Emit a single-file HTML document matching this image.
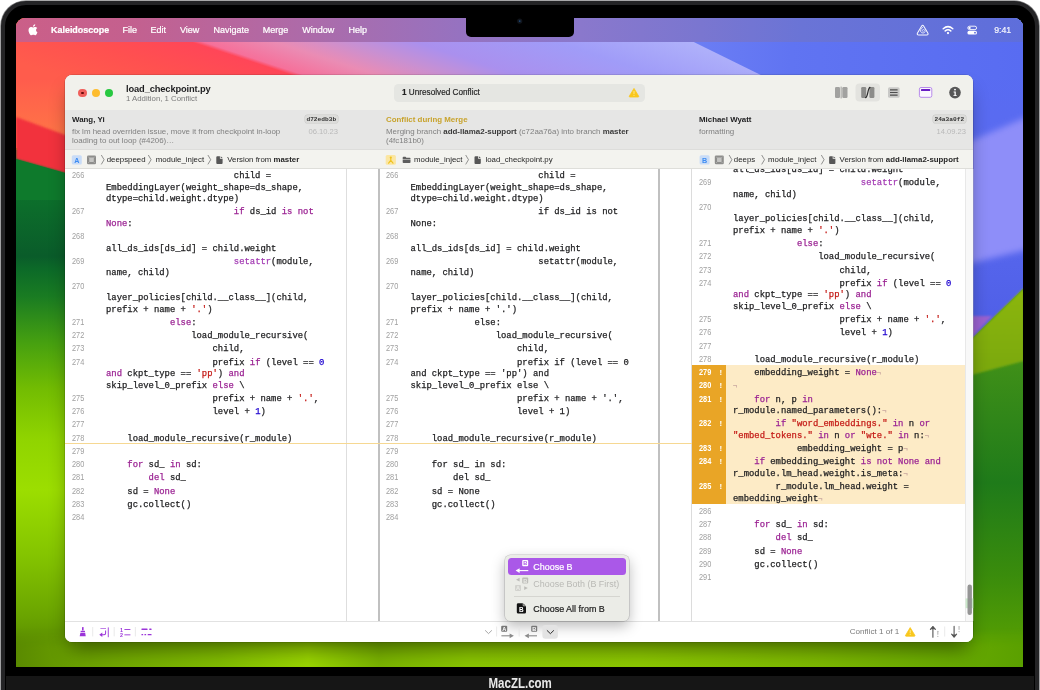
<!DOCTYPE html>
<html lang="en">
<head>
<meta charset="utf-8">
<title>Kaleidoscope – load_checkpoint.py</title>
<style>
*{box-sizing:border-box;margin:0;padding:0}
html,body{width:1040px;height:690px;overflow:hidden;background:#fff;font-family:"Liberation Sans",sans-serif;}
.abs{position:absolute}
#laptop{position:absolute;left:1px;top:1px;width:1038px;height:720px;border-radius:25px 25px 0 0;background:#000;border:4px solid #242426;box-shadow:0 0 0 .8px #8a8a8c}
#screen{will-change:transform;position:absolute;left:16px;top:18px;width:1007px;height:649px;border-radius:9px 9px 0 0;overflow:hidden;background:#6a9a10;}
#chin{will-change:transform;position:absolute;left:6px;top:675.7px;width:1028px;height:14px;background:#161616;color:#fff;text-align:center;}
#chin span{position:absolute;left:0;width:100%;top:.6px;font:bold 13.8px/14px "Liberation Sans",sans-serif;transform:scaleX(.835);transform-origin:515px 0;color:#e9e9e9}
#menubar{position:absolute;left:0;top:0;width:1008px;height:24.3px;background:linear-gradient(90deg,#cb5f88 0%,#c4608e 11%,#b468a2 24%,#a46eb2 35%,#9672c0 44%,#8a78cc 56%,#7a76d0 68%,#6a74d6 78%,#5e6edb 100%);color:#fff;font-size:9px;line-height:24.6px;white-space:nowrap}
#menubar span{position:absolute;top:0;-webkit-text-stroke:.22px #fff}
#notch{position:absolute;left:450px;top:0;width:108px;height:19px;background:#000;border-radius:0 0 5px 5px}
/* window: page coords */
#winshadow{position:absolute;left:65px;top:75.3px;width:908px;height:567.2px;border-radius:7px;box-shadow:0 12px 20px -5px rgba(0,0,0,.45),0 0 0 .6px rgba(0,0,0,.2)}
#win{will-change:transform;position:absolute;left:65px;top:75.3px;width:908px;height:567.2px;border-radius:7px;background:#fff;overflow:hidden}
#titlebar{position:absolute;left:0;top:0;width:908px;height:34.7px;background:#f1f1ec}
#info{position:absolute;left:0;top:34.7px;width:908px;height:40px;background:#e6e6e5;border-bottom:1px solid #dddddb}
#pathbar{position:absolute;left:0;top:74.7px;width:908px;height:19px;background:#f3f3ef;border-bottom:1px solid #dededa;font-size:7.85px;line-height:19px;color:#262626;white-space:nowrap}
#pathbar span{position:absolute;top:.2px}
.tl{position:absolute;top:13.5px;width:8.6px;height:8.6px;border-radius:50%}
.t{position:absolute;white-space:nowrap}
.pane{position:absolute;top:93.7px;height:453px;background:#fff;overflow:hidden}
.ln{position:relative;padding-top:1.75px}
.ln pre{font-family:"Liberation Mono",monospace;font-size:8.9px;line-height:11.5px;color:#1d1d1f;margin-left:41px;white-space:pre;-webkit-text-stroke:.25px #1d1d1f}
.ln .no{position:absolute;left:7px;top:.8px;font-size:8.2px;transform:scaleX(.9);transform-origin:0 0;line-height:11.5px;color:#a0a0a0;font-family:"Liberation Sans",sans-serif}
.ln .mk{position:absolute;left:27.6px;top:.8px;font-size:7.8px;line-height:11.5px;color:#fff;font-weight:bold}
#pm .ln pre{margin-left:30.3px}
#pm .ln .no{left:5.4px}
.k{color:#9b2393;-webkit-text-stroke-color:#9b2393}
.b{color:#a43db4;-webkit-text-stroke-color:#a43db4}
.s{color:#c41a16;-webkit-text-stroke-color:#c41a16}
.n{color:#1c00cf;-webkit-text-stroke-color:#1c00cf}
.e{color:#c9a8a0;-webkit-text-stroke-color:#c9a8a0;font-size:7px}
.cfblock{position:relative;z-index:0}
.cfblock::before{content:"";position:absolute;left:0;right:0;top:-1.3px;bottom:1.4px;z-index:-1;background:linear-gradient(90deg,#e9a526 0,#e9a526 34.3px,#fdebc6 34.3px)}
.cf .no{color:#fff;font-weight:bold}
#bottombar{position:absolute;left:0;top:545.7px;width:908px;height:21.5px;background:#fff;border-top:1px solid #e2e2e2}
#menu{position:absolute;left:439.5px;top:479.7px;width:124.7px;height:66px;border-radius:5.5px;background:#ebece7;box-shadow:0 0 0 .6px rgba(0,0,0,.18),0 5px 14px rgba(0,0,0,.28);font-size:8.95px;color:#1a1a1a}
.pill{position:absolute;height:7.6px;border-radius:2.6px;background:#dcdcda;box-shadow:0 0 0 .5px #c9c9c7;font:bold 6.2px/9px "Liberation Mono",monospace;color:#303030;text-align:center}
</style>
</head>
<body>
<div id="laptop"></div>
<div id="screen">
  <div id="wall" class="abs" style="left:0;top:0;width:1008px;height:649px"><svg width="1008" height="649" viewBox="16 18 1008 649" style="position:absolute;left:0;top:0">
<defs>
<linearGradient id="gt" gradientUnits="userSpaceOnUse" x1="-173" y1="0" x2="830" y2="0" gradientTransform="skewX(71.8)">
<stop offset="0" stop-color="#ff5c4c"/>
<stop offset=".13" stop-color="#ff5050"/>
<stop offset=".236" stop-color="#ff4658"/>
<stop offset=".248" stop-color="#f6709a"/>
<stop offset=".32" stop-color="#ea8cb4"/>
<stop offset=".39" stop-color="#c890d2"/>
<stop offset=".46" stop-color="#aa90ee"/>
<stop offset=".60" stop-color="#a09cf8"/>
<stop offset=".78" stop-color="#b4b8fb"/>
<stop offset="1" stop-color="#b4b8fb"/>
</linearGradient>
<linearGradient id="gtb" gradientUnits="userSpaceOnUse" x1="690" y1="0" x2="1024" y2="0">
<stop offset="0" stop-color="#6c7ef4"/><stop offset=".3" stop-color="#6074f2"/><stop offset="1" stop-color="#586cf2"/>
</linearGradient>
<linearGradient id="gl1" gradientUnits="userSpaceOnUse" x1="0" y1="76" x2="0" y2="140"><stop offset="0" stop-color="#ff5b4d"/><stop offset="1" stop-color="#ff7646"/></linearGradient>
<linearGradient id="gl2" gradientUnits="userSpaceOnUse" x1="0" y1="160" x2="0" y2="667">
<stop offset="0" stop-color="#0e7c2c"/>
<stop offset=".19" stop-color="#0a5c2a"/>
<stop offset=".215" stop-color="#0c6a28"/>
<stop offset=".27" stop-color="#1a7c22"/>
<stop offset=".36" stop-color="#46a010"/>
<stop offset=".45" stop-color="#72bc02"/>
<stop offset=".55" stop-color="#90d400"/>
<stop offset=".65" stop-color="#9cde00"/>
<stop offset=".78" stop-color="#84c400"/>
<stop offset=".9" stop-color="#6aa400"/>
<stop offset="1" stop-color="#507c00"/>
</linearGradient>
<linearGradient id="gr1" gradientUnits="userSpaceOnUse" x1="0" y1="42" x2="0" y2="340">
<stop offset="0" stop-color="#586cf2"/>
<stop offset=".5" stop-color="#5a6af0"/>
<stop offset="1" stop-color="#4e5ee6"/>
</linearGradient>
<linearGradient id="gr2" gradientUnits="userSpaceOnUse" x1="0" y1="360" x2="0" y2="667">
<stop offset="0" stop-color="#409018"/>
<stop offset=".4" stop-color="#1f7b1a"/>
<stop offset=".7" stop-color="#3a8c0c"/>
<stop offset="1" stop-color="#5ea400"/>
</linearGradient>
<linearGradient id="gr3" gradientUnits="userSpaceOnUse" x1="0" y1="290" x2="0" y2="375">
<stop offset="0" stop-color="#8cb60a"/>
<stop offset="1" stop-color="#7aa812"/>
</linearGradient>
<linearGradient id="gb" gradientUnits="userSpaceOnUse" x1="16" y1="0" x2="1024" y2="0">
<stop offset="0" stop-color="#5a8a00"/>
<stop offset=".06" stop-color="#6aa000"/>
<stop offset=".2" stop-color="#80bc00"/>
<stop offset=".29" stop-color="#9ad600"/>
<stop offset=".36" stop-color="#7ab400"/>
<stop offset=".45" stop-color="#8ac600"/>
<stop offset=".62" stop-color="#8cc800"/>
<stop offset=".8" stop-color="#7cb800"/>
<stop offset=".94" stop-color="#66a800"/>
<stop offset="1" stop-color="#5aa000"/>
</linearGradient>
<linearGradient id="gbv" x1="0" y1="0" x2="0" y2="1"><stop offset="0" stop-color="#000" stop-opacity="0"/><stop offset="1" stop-color="#000" stop-opacity=".22"/></linearGradient>
<filter id="bl"><feGaussianBlur stdDeviation="1.2"/></filter>
<linearGradient id="gmk" gradientUnits="userSpaceOnUse" x1="0" y1="628" x2="0" y2="648"><stop offset="0" stop-color="#000"/><stop offset="1" stop-color="#fff"/></linearGradient>
<mask id="mk" maskUnits="userSpaceOnUse" x="16" y="600" width="1008" height="67"><rect x="16" y="600" width="1008" height="67" fill="url(#gmk)"/></mask>
<filter id="bl3"><feGaussianBlur stdDeviation="3"/></filter>
</defs>
<rect x="16" y="18" width="1008" height="649" fill="#6aa000"/>
<!-- left strip -->
<rect x="16" y="150" width="60" height="517" fill="url(#gl2)"/>
<rect x="16" y="18" width="60" height="130" fill="url(#gl1)"/>
<polygon points="16,117 76,139 76,176 16,159" fill="#f2303e" filter="url(#bl)"/>
<polygon points="16,159 76,176 76,200 16,200" fill="#0e7a2c"/>
<!-- right strip -->
<rect x="960" y="18" width="64" height="330" fill="url(#gr1)"/>
<polygon points="950,150 1034,114 1034,248 950,268" fill="#8e8ef9" filter="url(#bl3)"/>
<polygon points="1024,288 960,350 960,667 1024,667" fill="url(#gr2)"/>
<polygon points="1024,288 960,350 960,378 1024,361" fill="url(#gr3)" filter="url(#bl)"/>
<polygon points="960,316 992,316 960,350" fill="#9a62d0" filter="url(#bl)"/>
<!-- bottom strip -->
<rect x="16" y="600" width="1008" height="67" fill="url(#gb)" mask="url(#mk)"/>
<!-- top strip -->
<rect x="16" y="18" width="1008" height="62" fill="url(#gt)"/>
<polygon points="645,18 1024,18 1024,80 771,80" fill="url(#gtb)"/>
</svg>
</div>
  <div id="menubar">
    <span style="left:35px;font-weight:bold;font-size:8.95px">Kaleidoscope</span>
    <span style="left:106.6px">File</span>
    <span style="left:134.5px">Edit</span>
    <span style="left:164px">View</span>
    <span style="left:197.5px">Navigate</span>
    <span style="left:246.7px">Merge</span>
    <span style="left:286.3px">Window</span>
    <span style="left:332.4px">Help</span>
    <span style="left:978.2px;font-size:8.75px;opacity:.92">9:41</span>
  </div>
  <div id="notch"></div>
</div>
<div id="winshadow"></div>
<div id="win">
  <div id="titlebar">
    <div class="tl" style="left:13.2px;background:#f0605c"></div>
    <div class="abs" style="left:16.2px;top:16.5px;width:2.6px;height:2.6px;border-radius:50%;background:#6a0a0a"></div>
    <div class="tl" style="left:26.5px;background:#fdbc2e"></div>
    <div class="tl" style="left:39.8px;background:#28c840"></div>
    <div class="t" id="ttl" style="left:61px;top:8px;font-weight:bold;font-size:9.3px;line-height:12px;color:#1d1d1f;letter-spacing:-.12px">load_checkpoint.py</div>
    <div class="t" id="sub" style="left:61px;top:19.2px;font-size:7.8px;line-height:9px;color:#7a7a7a">1 Addition, 1 Conflict</div>
    <div class="abs" style="left:329px;top:8.6px;width:251px;height:18.2px;border-radius:4.5px;background:#e5e6e2"></div>
    <div class="t" id="unres" style="left:337px;top:9.4px;font-size:8.2px;line-height:18.2px;color:#222;-webkit-text-stroke:.15px #222"><b>1</b> Unresolved Conflict</div>
  </div>
  <div id="info">
    <div class="t" id="a1" style="left:7px;top:5.4px;font-weight:bold;font-size:7.9px;line-height:10px;color:#1d1d1f">Wang, Yi</div>
    <div class="t" id="d1" style="left:7px;top:16.9px;font-size:7.93px;line-height:9.3px;color:#808080">fix lm head overriden issue, move it from checkpoint in-loop<br>loading to out loop (#4206)…</div>
    <div class="pill" style="left:239.6px;top:5.8px;width:33.4px">d72edb3b</div>
    <div class="t" id="dt1" style="right:635px;top:17.1px;font-size:7.6px;line-height:9.1px;color:#b9b9b9">06.10.23</div>
    <div class="t" id="a2" style="left:321px;top:5.4px;font-weight:bold;font-size:7.9px;line-height:10px;color:#c8a32c">Conflict during Merge</div>
    <div class="t" id="d2" style="left:321px;top:16.9px;font-size:7.93px;line-height:9.3px;color:#808080">Merging branch <b style="color:#3a3a3a">add-llama2-support</b> (c72aa76a) into branch <b style="color:#3a3a3a">master</b><br>(4fc181b0)</div>
    <div class="t" id="a3" style="left:634px;top:5.4px;font-weight:bold;font-size:7.9px;line-height:10px;color:#1d1d1f">Michael Wyatt</div>
    <div class="t" id="d3" style="left:634px;top:16.9px;font-size:7.93px;line-height:9.3px;color:#808080">formatting</div>
    <div class="pill" style="left:867.8px;top:5.8px;width:33px">24a3a0f2</div>
    <div class="t" id="dt2" style="right:7px;top:17.1px;font-size:7.6px;line-height:9.1px;color:#b9b9b9">14.09.23</div>
  </div>
  <div id="pathbar">
    <span id="p1" style="left:41.7px">deepspeed</span>
    <span id="p2" style="left:90.7px">module_inject</span>
    <span id="p3" style="left:162.3px">Version from <b>master</b></span>
    <span id="p4" style="left:349px">module_inject</span>
    <span id="p5" style="left:420.5px">load_checkpoint.py</span>
    <span id="p6" style="left:668.8px">deeps</span>
    <span id="p7" style="left:703px">module_inject</span>
    <span id="p8" style="left:774.6px">Version from <b>add-llama2-support</b></span>
  </div>
  <div class="pane" id="pl" style="left:0;width:281.5px;border-right:1px solid #dedede;padding-top:.7px">
<div class="ln "><span class="no">266</span><span class="mk"></span><pre>                        child = <br>EmbeddingLayer(weight_shape=ds_shape,<br>dtype=child.weight.dtype)</pre></div>
<div class="ln "><span class="no">267</span><span class="mk"></span><pre>                        <span class="k">if</span> ds_id <span class="k">is not</span><br><span class="k">None</span>:</pre></div>
<div class="ln "><span class="no">268</span><span class="mk"></span><pre>&nbsp;<br>all_ds_ids[ds_id] = child.weight</pre></div>
<div class="ln "><span class="no">269</span><span class="mk"></span><pre>                        <span class="b">setattr</span>(module,<br>name, child)</pre></div>
<div class="ln "><span class="no">270</span><span class="mk"></span><pre>&nbsp;<br>layer_policies[child.__class__](child,<br>prefix + name + <span class="s">'.'</span>)</pre></div>
<div class="ln "><span class="no">271</span><span class="mk"></span><pre>            <span class="k">else</span>:</pre></div>
<div class="ln "><span class="no">272</span><span class="mk"></span><pre>                load_module_recursive(</pre></div>
<div class="ln "><span class="no">273</span><span class="mk"></span><pre>                    child,</pre></div>
<div class="ln "><span class="no">274</span><span class="mk"></span><pre>                    prefix <span class="k">if</span> (level == <span class="n">0</span><br><span class="k">and</span> ckpt_type == <span class="s">'pp'</span>) <span class="k">and</span><br>skip_level_0_prefix <span class="k">else</span> \</pre></div>
<div class="ln "><span class="no">275</span><span class="mk"></span><pre>                    prefix + name + <span class="s">'.'</span>,</pre></div>
<div class="ln "><span class="no">276</span><span class="mk"></span><pre>                    level + <span class="n">1</span>)</pre></div>
<div class="ln "><span class="no">277</span><span class="mk"></span><pre>&nbsp;</pre></div>
<div class="ln "><span class="no">278</span><span class="mk"></span><pre>    load_module_recursive(r_module)</pre></div>
<div class="ln "><span class="no">279</span><span class="mk"></span><pre>&nbsp;</pre></div>
<div class="ln "><span class="no">280</span><span class="mk"></span><pre>    <span class="k">for</span> sd_ <span class="k">in</span> sd:</pre></div>
<div class="ln "><span class="no">281</span><span class="mk"></span><pre>        <span class="k">del</span> sd_</pre></div>
<div class="ln "><span class="no">282</span><span class="mk"></span><pre>    sd = <span class="k">None</span></pre></div>
<div class="ln "><span class="no">283</span><span class="mk"></span><pre>    gc.collect()</pre></div>
<div class="ln "><span class="no">284</span><span class="mk"></span><pre>&nbsp;</pre></div>
  </div>
  <div class="pane" id="pm" style="left:313.2px;width:281.6px;border-left:2px solid #c0c0c0;border-right:2px solid #c0c0c0;padding-top:.7px">
<div class="ln "><span class="no">266</span><span class="mk"></span><pre>                        child = <br>EmbeddingLayer(weight_shape=ds_shape,<br>dtype=child.weight.dtype)</pre></div>
<div class="ln "><span class="no">267</span><span class="mk"></span><pre>                        if ds_id is not<br>None:</pre></div>
<div class="ln "><span class="no">268</span><span class="mk"></span><pre>&nbsp;<br>all_ds_ids[ds_id] = child.weight</pre></div>
<div class="ln "><span class="no">269</span><span class="mk"></span><pre>                        setattr(module,<br>name, child)</pre></div>
<div class="ln "><span class="no">270</span><span class="mk"></span><pre>&nbsp;<br>layer_policies[child.__class__](child,<br>prefix + name + '.')</pre></div>
<div class="ln "><span class="no">271</span><span class="mk"></span><pre>            else:</pre></div>
<div class="ln "><span class="no">272</span><span class="mk"></span><pre>                load_module_recursive(</pre></div>
<div class="ln "><span class="no">273</span><span class="mk"></span><pre>                    child,</pre></div>
<div class="ln "><span class="no">274</span><span class="mk"></span><pre>                    prefix if (level == 0<br>and ckpt_type == 'pp') and<br>skip_level_0_prefix else \</pre></div>
<div class="ln "><span class="no">275</span><span class="mk"></span><pre>                    prefix + name + '.',</pre></div>
<div class="ln "><span class="no">276</span><span class="mk"></span><pre>                    level + 1)</pre></div>
<div class="ln "><span class="no">277</span><span class="mk"></span><pre>&nbsp;</pre></div>
<div class="ln "><span class="no">278</span><span class="mk"></span><pre>    load_module_recursive(r_module)</pre></div>
<div class="ln "><span class="no">279</span><span class="mk"></span><pre>&nbsp;</pre></div>
<div class="ln "><span class="no">280</span><span class="mk"></span><pre>    for sd_ in sd:</pre></div>
<div class="ln "><span class="no">281</span><span class="mk"></span><pre>        del sd_</pre></div>
<div class="ln "><span class="no">282</span><span class="mk"></span><pre>    sd = None</pre></div>
<div class="ln "><span class="no">283</span><span class="mk"></span><pre>    gc.collect()</pre></div>
<div class="ln "><span class="no">284</span><span class="mk"></span><pre>&nbsp;</pre></div>
  </div>
  <div class="pane" id="pr" style="left:626px;width:274px;border-left:1px solid #dcdcdc">
  <div style="margin-top:-5.6px">
<div class="ln "><span class="no"></span><span class="mk"></span><pre>all_ds_ids[ds_id] = child.weight</pre></div>
<div class="ln "><span class="no">269</span><span class="mk"></span><pre>                        <span class="b">setattr</span>(module,<br>name, child)</pre></div>
<div class="ln "><span class="no">270</span><span class="mk"></span><pre>&nbsp;<br>layer_policies[child.__class__](child,<br>prefix + name + <span class="s">'.'</span>)</pre></div>
<div class="ln "><span class="no">271</span><span class="mk"></span><pre>            <span class="k">else</span>:</pre></div>
<div class="ln "><span class="no">272</span><span class="mk"></span><pre>                load_module_recursive(</pre></div>
<div class="ln "><span class="no">273</span><span class="mk"></span><pre>                    child,</pre></div>
<div class="ln "><span class="no">274</span><span class="mk"></span><pre>                    prefix <span class="k">if</span> (level == <span class="n">0</span><br><span class="k">and</span> ckpt_type == <span class="s">'pp'</span>) <span class="k">and</span><br>skip_level_0_prefix <span class="k">else</span> \</pre></div>
<div class="ln "><span class="no">275</span><span class="mk"></span><pre>                    prefix + name + <span class="s">'.'</span>,</pre></div>
<div class="ln "><span class="no">276</span><span class="mk"></span><pre>                    level + <span class="n">1</span>)</pre></div>
<div class="ln "><span class="no">277</span><span class="mk"></span><pre>&nbsp;</pre></div>
<div class="ln "><span class="no">278</span><span class="mk"></span><pre>    load_module_recursive(r_module)</pre></div>
<div class="cfblock"><div class="ln cf"><span class="no">279</span><span class="mk">!</span><pre>    embedding_weight = <span class="k">None</span><span class="e">¬</span></pre></div>
<div class="ln cf"><span class="no">280</span><span class="mk">!</span><pre><span class="e">¬</span></pre></div>
<div class="ln cf"><span class="no">281</span><span class="mk">!</span><pre>    <span class="k">for</span> n, p <span class="k">in</span><br>r_module.named_parameters():<span class="e">¬</span></pre></div>
<div class="ln cf"><span class="no">282</span><span class="mk">!</span><pre>        <span class="k">if</span> <span class="s">"word_embeddings."</span> <span class="k">in</span> n <span class="k">or</span><br><span class="s">"embed_tokens."</span> <span class="k">in</span> n <span class="k">or</span> <span class="s">"wte."</span> <span class="k">in</span> n:<span class="e">¬</span></pre></div>
<div class="ln cf"><span class="no">283</span><span class="mk">!</span><pre>            embedding_weight = p<span class="e">¬</span></pre></div>
<div class="ln cf"><span class="no">284</span><span class="mk">!</span><pre>    <span class="k">if</span> embedding_weight <span class="k">is not None and</span><br>r_module.lm_head.weight.is_meta:<span class="e">¬</span></pre></div>
<div class="ln cf"><span class="no">285</span><span class="mk">!</span><pre>        r_module.lm_head.weight =<br>embedding_weight<span class="e">¬</span></pre></div></div>
<div class="ln "><span class="no">286</span><span class="mk"></span><pre>&nbsp;</pre></div>
<div class="ln "><span class="no">287</span><span class="mk"></span><pre>    <span class="k">for</span> sd_ <span class="k">in</span> sd:</pre></div>
<div class="ln "><span class="no">288</span><span class="mk"></span><pre>        <span class="k">del</span> sd_</pre></div>
<div class="ln "><span class="no">289</span><span class="mk"></span><pre>    sd = <span class="k">None</span></pre></div>
<div class="ln "><span class="no">290</span><span class="mk"></span><pre>    gc.collect()</pre></div>
<div class="ln "><span class="no">291</span><span class="mk"></span><pre>&nbsp;</pre></div>
  </div>
  </div>
  <div class="abs" style="left:0;top:367.6px;width:627px;height:1.7px;background:#f6d892"></div>
  <div id="bottombar">
    <div class="t" id="cf1" style="left:784.7px;top:-.4px;font-size:8.1px;line-height:21px;color:#7a7a7a">Conflict 1 of 1</div>
  </div>
  <div id="menu">
    <div class="abs" style="left:3.6px;top:3.4px;width:117.5px;height:16.8px;border-radius:3.5px;background:#aa58e8"></div>
    <div class="t" id="m1" style="left:28.8px;top:4.2px;line-height:17.2px;color:#fff;-webkit-text-stroke:.2px #fff">Choose B</div>
    <div class="t" id="m2" style="left:28.8px;top:21.3px;line-height:17.2px;color:#b9b9b5">Choose Both (B First)</div>
    <div class="abs" style="left:9.5px;top:41.2px;width:106px;height:1px;background:#d5d5d0"></div>
    <div class="t" id="m3" style="left:28.8px;top:46.2px;line-height:17.2px;-webkit-text-stroke:.2px #1a1a1a">Choose All from B</div>
  </div>
</div>
<svg width="1040" height="690" viewBox="0 0 1040 690" style="position:absolute;left:0;top:0;pointer-events:none">
<!-- apple logo -->
<g fill="#fff" transform="translate(26.8,24.1) scale(0.0139)">
<path d="M665 432c-1-101 82-149 86-152-47-68-120-78-146-79-62-6-121 37-152 37-32 0-80-36-132-35-68 1-130 39-165 100-70 122-18 302 50 401 34 48 73 103 125 101 50-2 69-32 130-32 60 0 77 32 130 31 54-1 88-49 121-98 38-56 54-110 55-113-1 0-105-40-106-161zM566 136c27-33 46-80 41-126-40 2-88 27-116 60-26 30-48 77-42 122 44 4 90-22 117-56z"/>
</g>
<!-- camera -->
<circle cx="519.7" cy="21.1" r="2.6" fill="#11151c"/><circle cx="519.7" cy="21.1" r=".9" fill="#1f4a7a"/>
<!-- menubar right: kaleidoscope -->
<g fill="none" stroke="#fff" stroke-width="1" stroke-linejoin="round" stroke-linecap="round" opacity=".95">
<path d="M921.7 26 Q922.65 24.5 923.6 26 L927.8 33 Q928.7 34.9 926.6 35 L918.7 35 Q916.6 34.9 917.5 33 Z" stroke-width="1.05"/>
<path d="M922.7 27.4 C919.4 29.4 920 33 923 33 C925.6 33 925.8 29.9 923.6 29.6 C922.1 29.4 921.7 31.3 923.1 31.5" stroke-width=".8"/>
</g>
<!-- wifi -->
<g fill="none" stroke="#fff" stroke-width="1.5" stroke-linecap="round">
<path d="M943.2 28.7 Q948 24.6 952.8 28.7"/>
<path d="M945.2 30.9 Q948 28.6 950.8 30.9"/>
</g>
<circle cx="948" cy="33.1" r="1.15" fill="#fff"/>
<!-- control center -->
<rect x="967.8" y="26.2" width="8.8" height="3.4" rx="1.7" fill="none" stroke="#fff" stroke-width=".9"/>
<circle cx="969.6" cy="27.9" r="1.1" fill="#fff"/>
<rect x="967.4" y="30.8" width="9.6" height="3.7" rx="1.85" fill="#fff"/>
<circle cx="975" cy="32.65" r=".9" fill="#5b6ad8"/>
<!-- warning in pill -->
<g id="warn">
<path d="M634 88.4 L638.7 96.2 Q639 97 638.1 97 L629.9 97 Q629 97 629.3 96.2Z" fill="#f9c71c" stroke="#f9c71c" stroke-width=".8" stroke-linejoin="round"/>
<rect x="633.55" y="90.7" width=".9" height="3.4" rx=".4" fill="#fdeb9a"/><circle cx="634" cy="95.3" r=".55" fill="#fdeb9a"/>
</g>
<!-- toolbar icons -->
<rect x="835" y="87" width="5" height="11" rx="1.2" fill="#a2a2a0"/>
<rect x="840.7" y="86.6" width=".8" height="11.8" fill="#8a8a88"/>
<rect x="842.3" y="87" width="5.2" height="11" rx="1.2" fill="#a2a2a0"/>
<rect x="855.5" y="83.5" width="24.5" height="18" rx="4" fill="#e3e3df"/>
<rect x="861.2" y="87" width="5" height="11" rx="1.2" fill="#8c8c8a"/>
<rect x="869.4" y="87" width="5" height="11" rx="1.2" fill="#8c8c8a"/>
<path d="M865.6 97.6 C868.2 96.6 867.4 88.6 870 87.4" fill="none" stroke="#2c2c2c" stroke-width="1.2" stroke-linecap="round"/>
<rect x="888" y="87.2" width="11.6" height="10.6" rx="1.6" fill="#c9c9c7"/>
<path d="M890 89.9h7.6M890 92.5h7.6M890 95.1h7.6" stroke="#4e4e4e" stroke-width="1.2"/>
<rect x="919.4" y="87.5" width="12.4" height="9.8" rx="1.6" fill="#fbf7ff" stroke="#b78aea" stroke-width="1"/>
<rect x="921" y="89" width="9.2" height="2" rx=".5" fill="#6a1fc4"/>
<circle cx="955" cy="92.6" r="5.8" fill="#575757"/>
<circle cx="955" cy="89.6" r=".95" fill="#fff"/>
<path d="M953.6 91.6h2.2v3.6h1v.9h-3.4v-.9h1.1v-2.7h-.9z" fill="#fff"/>
<!-- pathbar left -->
<rect x="71.8" y="155.2" width="10" height="9.2" rx="1.5" fill="#c9dcf7"/>
<rect x="87" y="155.4" width="9" height="8.8" rx="1.3" fill="#8d8d8b"/>
<rect x="89.2" y="157.6" width="4.6" height="4.4" rx=".8" fill="#c4c4c2"/>
<path d="M88.2 156.6l1.4 1.4M94.8 156.6l-1.4 1.4M88.2 163l1.4-1.4M94.8 163l-1.4-1.4" stroke="#c4c4c2" stroke-width=".6"/>
<g fill="none" stroke="#666" stroke-width=".7" transform="translate(-.3,0)">
<path d="M101.6 155 L104.4 159.7 L101.6 164.4"/>
<path d="M148.6 155 L151.4 159.7 L148.6 164.4"/>
<path d="M208.2 155 L211 159.7 L208.2 164.4"/>
<path d="M466 155 L468.8 159.7 L466 164.4"/>
<path d="M729.4 155 L732.2 159.7 L729.4 164.4"/>
<path d="M762 155 L764.8 159.7 L762 164.4"/>
<path d="M821.6 155 L824.4 159.7 L821.6 164.4"/>
</g>
<g id="fileic" fill="#575757">
<path d="M216.3 157.2 q0-1 1-1 h2.6 v2.6 h2.7 v4.2 q0 1-1 1 h-4.3 q-1 0-1-1z M220.7 156.3 l1.9 1.8 h-1.9z"/>
</g>
<use href="#fileic" x="258.2"/>
<use href="#fileic" x="612.8"/>
<!-- pathbar mid -->
<rect x="385.7" y="155" width="10.2" height="9.8" rx="1.5" fill="#fbe6a2"/>
<g stroke="#efc21e" fill="none" stroke-width="1.1" stroke-linecap="round"><path d="M390.8 158.6v1.8M390.8 160.4l-2.2 2.8M390.8 160.4l2.2 2.8"/></g><circle cx="390.8" cy="157.6" r="1.1" fill="#efc21e"/>
<path d="M402.7 157.6 q0-.8 .8-.8 h2 l.9 .9 h3.3 q.8 0 .8 .8 v.5 h-7.8z M402.7 159.6 h7.8 v2.7 q0 .8-.8 .8 h-6.2 q-.8 0-.8-.8z" fill="#5e5e5e"/>
<!-- pathbar right -->
<rect x="699.6" y="155.2" width="10" height="9.2" rx="1.5" fill="#c9dcf7"/>
<rect x="714.8" y="155.4" width="9" height="8.8" rx="1.3" fill="#8d8d8b"/>
<rect x="717" y="157.6" width="4.6" height="4.4" rx=".8" fill="#c4c4c2"/>
<path d="M716 156.6l1.4 1.4M722.6 156.6l-1.4 1.4M716 163l1.4-1.4M722.6 163l-1.4-1.4" stroke="#c4c4c2" stroke-width=".6"/>
<!-- bottom bar left (purple) -->
<g fill="#9b35d9" stroke="none">
<rect x="82" y="627" width="1.6" height="3.6" rx=".6"/>
<rect x="80.6" y="630.8" width="4.4" height="1.3"/>
<path d="M80.4 632.8h4.8l.5 3.4h-6z"/>
<rect x="100.4" y="628.1" width="5.6" height=".9" opacity=".7"/>
<rect x="107.8" y="627.4" width=".9" height="9.8"/>
<path d="M105.1 630.6h1v2.600q0 2-2 2h-2.300v-1h2.100q1.200 0 1.200-1.200z"/><path d="M102.300 632.400l-3 2.300 3 2.300z"/>
<rect x="124.4" y="629" width="6" height=".9"/>
<rect x="124.4" y="634.4" width="6" height=".9"/>
<rect x="141.4" y="628.6" width="6.2" height="1.3" rx=".4"/>
<rect x="149.2" y="628.6" width="2.4" height="1.3" rx=".4"/>
<rect x="141.4" y="634" width="1.8" height="1.3" rx=".4"/>
<rect x="144.4" y="634" width="1.8" height="1.3" rx=".4"/>
<rect x="147.6" y="634" width="4" height="1.3" rx=".4"/>
</g>
<g stroke="#e4e4e4" stroke-width=".8"><path d="M92.7 627v9.4M114.2 627v9.4M135.4 627v9.4M496.6 626.5v10M519.2 626.5v10M944.7 626.5v10"/></g>
<!-- bottom bar centre -->
<path d="M485.4 630.6 L488.5 633.6 L491.6 630.6" fill="none" stroke="#9c9c9c" stroke-width=".9" stroke-linecap="round" stroke-linejoin="round"/>
<rect x="501.2" y="625.7" width="6" height="6" rx="1" fill="#777"/>
<path d="M501.4 635.8h9" stroke="#8a8a8a" stroke-width="1.1"/><path d="M509.6 633.4l4.3 2.4-4.3 2.4z" fill="#8a8a8a"/>
<rect x="531.2" y="625.7" width="6" height="6" rx="1" fill="#777"/>
<path d="M528.6 635.8h8.4" stroke="#8a8a8a" stroke-width="1.1"/><path d="M528.9 633.4l-4.3 2.4 4.3 2.4z" fill="#8a8a8a"/>
<rect x="542.4" y="625" width="15.5" height="13.7" rx="3" fill="#e3e3e3"/>
<path d="M547.2 630.6 L550.4 633.7 L553.6 630.6" fill="none" stroke="#2e2e2e" stroke-width="1" stroke-linecap="round" stroke-linejoin="round"/>
<!-- bottom bar right -->
<use href="#warn" x="276.2" y="539.2"/>
<g fill="none" stroke="#555" stroke-width="1.1" stroke-linecap="round" stroke-linejoin="round">
<path d="M932.9 637.2v-10.6M930.4 629.4l2.5-2.9 2.5 2.9"/>
<path d="M954.1 626.4v10.6M951.6 634.2l2.5 2.9 2.5-2.9"/>
</g>
<path d="M932.9 626l2.300 3.200h-4.600z" fill="#555"/><path d="M954.1 637.600l2.300-3.200h-4.600z" fill="#555"/>
<g fill="#a8a8a8"><rect x="937.4" y="630.8" width=".9" height="4" rx=".4"/><circle cx="937.85" cy="636.4" r=".55"/><rect x="958.6" y="626" width=".9" height="4" rx=".4"/><circle cx="959.05" cy="631.6" r=".55"/></g>
<!-- scrollbar -->
<rect x="965.4" y="169" width="7.8" height="452" fill="#f8f8f8"/>
<rect x="965.2" y="169" width=".8" height="452" fill="#e4e4e4"/>
<rect x="965.6" y="598.4" width="7.6" height="9.8" fill="#cbe8cb"/>
<rect x="967.5" y="584.5" width="4.4" height="30.5" rx="2.2" fill="#8c8c8c" opacity=".92"/>
<!-- popup menu icons -->
<rect x="522.2" y="560" width="6" height="6.2" rx="1" fill="#fff"/>
<path d="M519 570.6h9.3" stroke="#fff" stroke-width="1.1"/><path d="M519.6 568.3l-4 2.3 4 2.3z" fill="#fff"/>
<g fill="#bdbdb9">
<rect x="522.2" y="577.4" width="6" height="6.2" rx="1"/>
<path d="M519.6 577.8l-3.6 1.9 3.6 1.9z"/>
<rect x="515" y="585" width="6" height="6" rx="1" opacity=".55"/>
<path d="M524.2 586.2l3.6 1.9-3.6 1.900z"/>
</g>
<path d="M516.8 604.6q0-1.400 1.400-1.400h4.800l3 2.800v6.200q0 1.400-1.400 1.400h-6.400q-1.400 0-1.400-1.400z" fill="#141414"/>
<path d="M523.200 603.200v2.600h2.800" fill="none" stroke="#ebece7" stroke-width=".7"/>
<!-- letters -->
<g font-family="Liberation Sans, sans-serif" font-weight="bold" text-anchor="middle">
<text x="76.8" y="162.5" font-size="7.2" fill="#3d8cf2">A</text>
<text x="704.6" y="162.5" font-size="7.2" fill="#3d8cf2">B</text>
<text x="504.2" y="630.7" font-size="5.6" fill="#fff">A</text>
<text x="534.2" y="630.7" font-size="5.6" fill="#fff">B</text>
<text x="525.2" y="565.1" font-size="5.6" fill="#aa58e8">B</text>
<text x="525.2" y="582.5" font-size="5.6" fill="#ebece7">B</text>
<text x="518" y="590" font-size="5.6" fill="#ebece7">A</text>
<text x="521.2" y="612" font-size="6.4" fill="#fff">B</text>
<text x="121.6" y="631.6" font-size="5.4" fill="#9b35d9">1</text>
<text x="121.6" y="637" font-size="5.4" fill="#9b35d9">2</text>
</g>
</svg>

<div id="chin"><span>MacZL.com</span></div>
</body>
</html>
